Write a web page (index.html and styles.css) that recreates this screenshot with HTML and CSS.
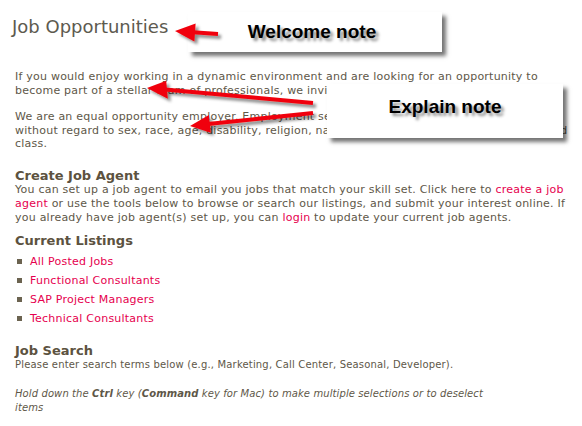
FILE: index.html
```html
<!DOCTYPE html>
<html lang="en">
<head>
  <meta charset="UTF-8" />
  <meta name="viewport" content="width=device-width, initial-scale=1.0"/>
  <title>Job Opportunities</title>
  <link rel="stylesheet" href="styles.css">
</head>
<body>
  <div class="page">
    <h1 class="page-title">Job Opportunities</h1>

    <p>If you would enjoy working in a dynamic environment and are looking for an opportunity to become part of a stellar team of professionals, we invite you to explore our listings.</p>

    <p class="intro-last">We are an equal opportunity employer. Employment selection is based on merit and ability, without regard to sex, race, age, disability, religion, national origin, color or any other protected class.</p>

    <!-- Job agent -->
    <h2 class="section-title">Create Job Agent</h2>
    <p class="section-text">You can set up a job agent to email you jobs that match your skill set. Click here to <a href="#">create a job agent</a> or use the tools below to browse or search our listings, and submit your interest online. If you already have job agent(s) set up, you can <a href="#">login</a> to update your current job agents.</p>

    <!-- Listings -->
    <h2 class="section-title">Current Listings</h2>
    <ul class="listings">
      <li><a href="#">All Posted Jobs</a></li>
      <li><a href="#">Functional Consultants</a></li>
      <li><a href="#">SAP Project Managers</a></li>
      <li><a href="#">Technical Consultants</a></li>
    </ul>

    <!-- Search -->
    <h2 class="section-title">Job Search</h2>
    <p class="search-text">Please enter search terms below (e.g., Marketing, Call Center, Seasonal, Developer).</p>
    <p class="hint">Hold down the <b>Ctrl</b> key (<b>Command</b> key for Mac) to make multiple selections or to deselect items</p>
  </div>

  <!-- annotation notes laid over the page -->
  <div class="note note-welcome">Welcome note</div>
  <div class="note note-explain">Explain note</div>

  <svg class="arrows" width="582" height="426" viewBox="0 0 582 426">
    <defs>
      <filter id="arrowShadow" x="-20%" y="-50%" width="140%" height="200%">
        <feDropShadow dx="3" dy="3" stdDeviation="1.6" flood-color="#000" flood-opacity="0.45"/>
      </filter>
    </defs>
    <g fill="#f0000a" stroke="#f0000a" filter="url(#arrowShadow)">
      <line x1="193" y1="32.3" x2="218" y2="34" stroke-width="4"/>
      <polygon points="175,31 194.4,41.4 195.6,23.4" stroke="none"/>

      <line x1="165" y1="89.6" x2="313" y2="103" stroke-width="4"/>
      <polygon points="147,88 166.2,80.8 167.8,98.8" stroke="none"/>

      <line x1="208" y1="124" x2="313" y2="113" stroke-width="4"/>
      <polygon points="190,126 210.8,132.8 208.9,114.9" stroke="none"/>
    </g>
  </svg>
</body>
</html>
```

FILE: styles.css
```css
:root {
  --text-grey: #5e5748;
  --heading-brown: #5c5240;
  --link-red: #e6004e;
  --font-stack: 'DejaVu Sans', Verdana, sans-serif;
}

body {
  margin: 0;
  background-color: #ffffff;
  font-family: var(--font-stack);
  font-size: 11px;
  color: var(--text-grey);
}

.page {
  padding: 15px 12px 0 15px;
  letter-spacing: 0.23px;
}

.page p {
  margin: 0 0 13px 0;
  line-height: 13.5px;
}

.page .intro-last {
  margin-bottom: 17px;
}

.page-title {
  margin: 0 0 31px -3px;
  font-size: 18px;
  font-weight: normal;
  line-height: 24px;
  letter-spacing: 0;
  color: #5d5a4f;
}

.section-title {
  margin: 0;
  font-size: 13px;
  font-weight: bold;
  line-height: 15px;
  letter-spacing: 0;
  color: var(--heading-brown);
}

.page .section-text {
  line-height: 14px;
  margin-bottom: 8px;
}

.page .search-text {
  font-size: 10px;
  line-height: 14px;
  letter-spacing: 0.17px;
  margin-bottom: 15px;
}

a {
  color: var(--link-red);
  text-decoration: none;
}

.listings {
  list-style: none;
  margin: 4px 0 15px 0;
  padding: 0;
}

.listings li {
  display: flex;
  align-items: center;
  gap: 8px;
  height: 19px;
  padding-left: 2px;
}

.listings li::before {
  content: '';
  width: 5px;
  height: 5px;
  background-color: #6b6350;
}

.page .hint {
  max-width: 475px;
  font-size: 10px;
  font-style: italic;
  line-height: 14px;
  letter-spacing: 0.1px;
}

.note {
  position: absolute;
  background-color: #ffffff;
  box-shadow: 4px 4px 4px rgba(0, 0, 0, 0.55);
  font-family: 'Liberation Sans', Arial, sans-serif;
  font-size: 19px;
  font-weight: bold;
  color: #000000;
  text-shadow: 3px 3px 3px rgba(0, 0, 0, 0.45);
  display: flex;
  align-items: center;
  justify-content: center;
  box-sizing: border-box;
}

.note-welcome {
  left: 188px;
  top: 12px;
  width: 254px;
  height: 40px;
  padding-right: 6px;
}

.note-explain {
  left: 327px;
  top: 84px;
  width: 236px;
  height: 54px;
  padding-bottom: 8px;
}

.arrows {
  position: absolute;
  left: 0;
  top: 0;
  pointer-events: none;
}
```
